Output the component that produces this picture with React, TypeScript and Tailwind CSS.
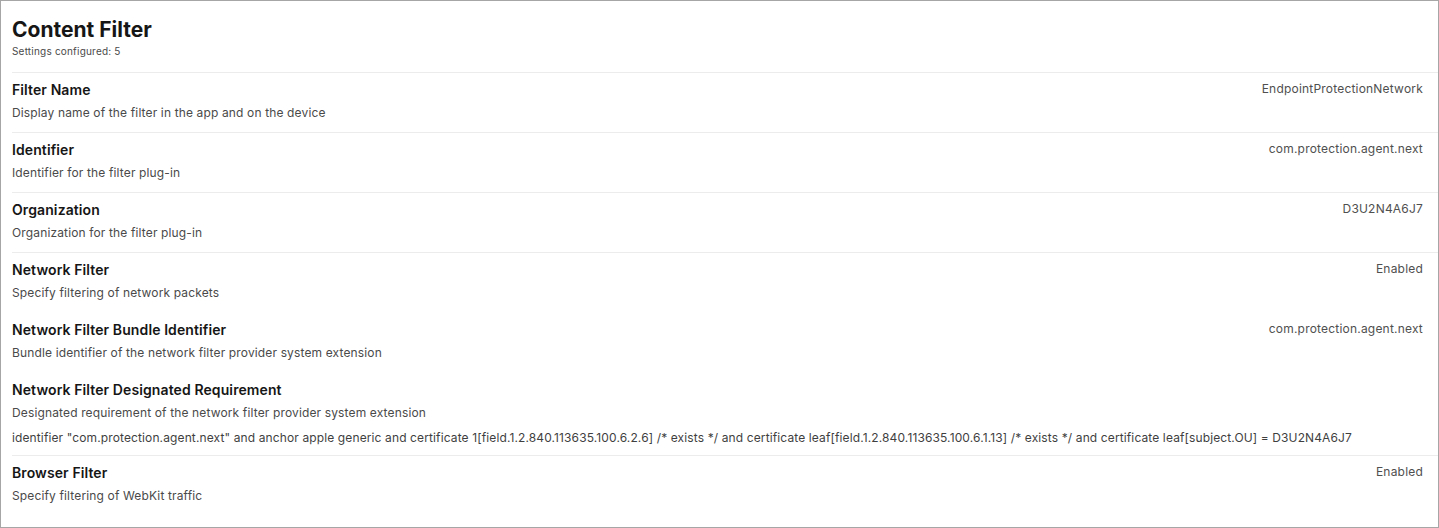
import React from 'react';

interface Setting {
  name: string;
  description: string;
  value: string;
  inline?: boolean;
  divider?: boolean;
}

const settings: Setting[] = [
  { name: 'Filter Name', description: 'Display name of the filter in the app and on the device', value: 'EndpointProtectionNetwork', divider: true },
  { name: 'Identifier', description: 'Identifier for the filter plug-in', value: 'com.protection.agent.next', divider: true },
  { name: 'Organization', description: 'Organization for the filter plug-in', value: 'D3U2N4A6J7', divider: true },
  { name: 'Network Filter', description: 'Specify filtering of network packets', value: 'Enabled', divider: true },
  { name: 'Network Filter Bundle Identifier', description: 'Bundle identifier of the network filter provider system extension', value: 'com.protection.agent.next' },
  {
    name: 'Network Filter Designated Requirement',
    description: 'Designated requirement of the network filter provider system extension',
    value:
      'identifier "com.protection.agent.next" and anchor apple generic and certificate 1[field.1.2.840.113635.100.6.2.6] /* exists */ and certificate leaf[field.1.2.840.113635.100.6.1.13] /* exists */ and certificate leaf[subject.OU] = D3U2N4A6J7',
    inline: true,
  },
  { name: 'Browser Filter', description: 'Specify filtering of WebKit traffic', value: 'Enabled', divider: true },
];

function SettingRow({ setting }: { setting: Setting }) {
  return (
    <div className={`border-t ${setting.divider ? 'border-[#ececec]' : 'border-transparent'} pt-[7px] pr-[15px] ${setting.inline ? 'pb-[7px]' : 'pb-[9px]'}`}>
      <div className="flex items-start justify-between">
        <div>
          <div className="text-[14px] leading-5 font-semibold tracking-[0.1px] text-[#161616]">{setting.name}</div>
          <div className="mt-[3px] text-[12px] leading-5 tracking-[0.14px] text-[#4a4a4a]">{setting.description}</div>
        </div>
        {!setting.inline && (
          <div className="text-[12px] leading-5 tracking-[0.2px] text-[#4f4f4f] -mt-[1px]">{setting.value}</div>
        )}
      </div>
      {setting.inline && (
        <div className="mt-[5px] text-[12px] leading-5 tracking-[0.12px] text-[#3f3f3f] whitespace-nowrap">{setting.value}</div>
      )}
    </div>
  );
}

export default function App() {
  return (
    <div className="h-[528px] w-[1439px] bg-white border border-[#a6a6a6] font-['Inter',sans-serif] overflow-hidden">
      <div className="pl-[11px] pt-[15px] pb-[14px]">
        <h1 className="text-[21px] leading-7 font-bold text-[#161616]">Content Filter</h1>
        <p className="text-[10px] leading-[14px] tracking-[0.2px] text-[#4a4a4a]">Settings configured: 5</p>
      </div>
      <div className="ml-[11px]">
        {settings.map((s) => (
          <SettingRow key={s.name} setting={s} />
        ))}
      </div>
    </div>
  );
}
